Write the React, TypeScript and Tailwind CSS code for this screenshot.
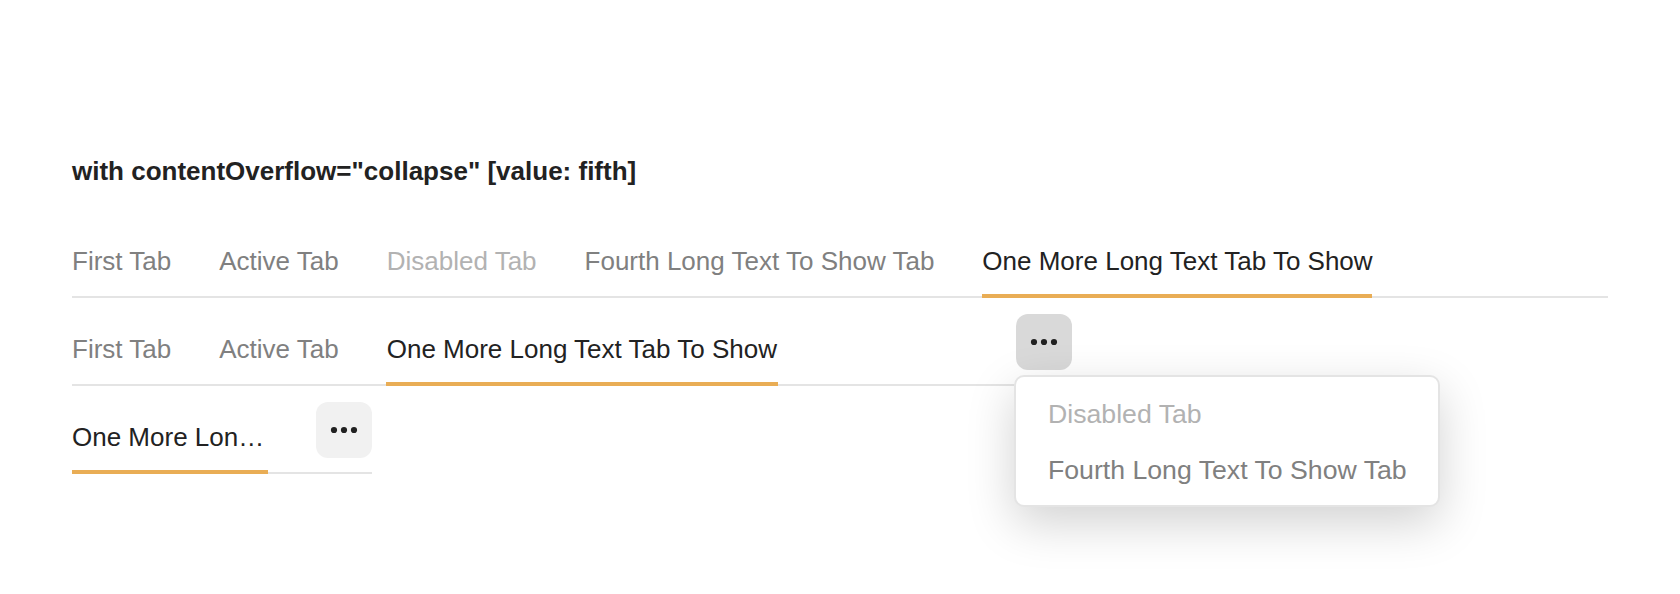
import React from "react";

type TabProps = { label: string; state?: "idle" | "active" | "disabled"; className?: string };

function Tab({ label, state = "idle", className = "" }: TabProps) {
  const tone =
    state === "active"
      ? "text-[#222222] border-[#e9ad55]"
      : state === "disabled"
        ? "text-[#b2b2b2] border-transparent"
        : "text-[#808080] border-transparent";
  return (
    <div className={`-mb-[2px] h-[72px] shrink-0 border-b-4 pt-[15px] text-[26px] leading-[40px] whitespace-nowrap ${tone} ${className}`}>
      {label}
    </div>
  );
}

function MoreButton({ pressed = false }: { pressed?: boolean }) {
  return (
    <button className={`ml-auto flex size-14 shrink-0 items-center justify-center rounded-xl ${pressed ? "bg-[#d9d9d9]" : "bg-[#f1f1f1]"}`}>
      <svg width="28" height="8" viewBox="0 0 28 8" fill="#222222">
        <circle cx="4" cy="4" r="3.1" />
        <circle cx="14" cy="4" r="3.1" />
        <circle cx="24" cy="4" r="3.1" />
      </svg>
    </button>
  );
}

export default function App() {
  return (
    <div className="h-[594px] w-[1680px] overflow-hidden bg-white px-[72px] pt-[151px] font-['Liberation_Sans',sans-serif] text-[#222222]">
      <h1 className="h-[75px] text-[26px] leading-[40px] font-bold">with contentOverflow="collapse" [value: fifth]</h1>
      <div className="flex h-[72px] w-[1536px] gap-12 border-b-2 border-[#e4e4e4]">
        <Tab label="First Tab" />
        <Tab label="Active Tab" />
        <Tab label="Disabled Tab" state="disabled" />
        <Tab label="Fourth Long Text To Show Tab" />
        <Tab label="One More Long Text Tab To Show" state="active" className="w-[390px]" />
      </div>
      <div className="relative mt-4 flex h-[72px] w-[1000px] gap-12 border-b-2 border-[#e4e4e4]">
        <Tab label="First Tab" />
        <Tab label="Active Tab" />
        <Tab label="One More Long Text Tab To Show" state="active" className="-mx-px px-px" />
        <MoreButton pressed />
        <div className="absolute top-[61px] left-[942px] flex h-[132px] w-[426px] flex-col rounded-[10px] border-2 border-[#e4e4e4] bg-white px-8 py-[9px] text-[26.667px] leading-[56px] whitespace-nowrap shadow-[0_16px_48px_rgba(0,0,0,0.18)]">
          <div className="text-[#b2b2b2]">Disabled Tab</div>
          <div className="text-[#808080]">Fourth Long Text To Show Tab</div>
        </div>
      </div>
      <div className="mt-4 flex h-[72px] w-[300px] border-b-2 border-[#e4e4e4]">
        <div className="-mb-[2px] h-[72px] w-[196px] shrink-0 truncate border-b-4 border-[#e9ad55] pt-[15px] text-[26px] leading-[40px]">One More Long Text Tab To Show</div>
        <MoreButton />
      </div>
    </div>
  );
}
